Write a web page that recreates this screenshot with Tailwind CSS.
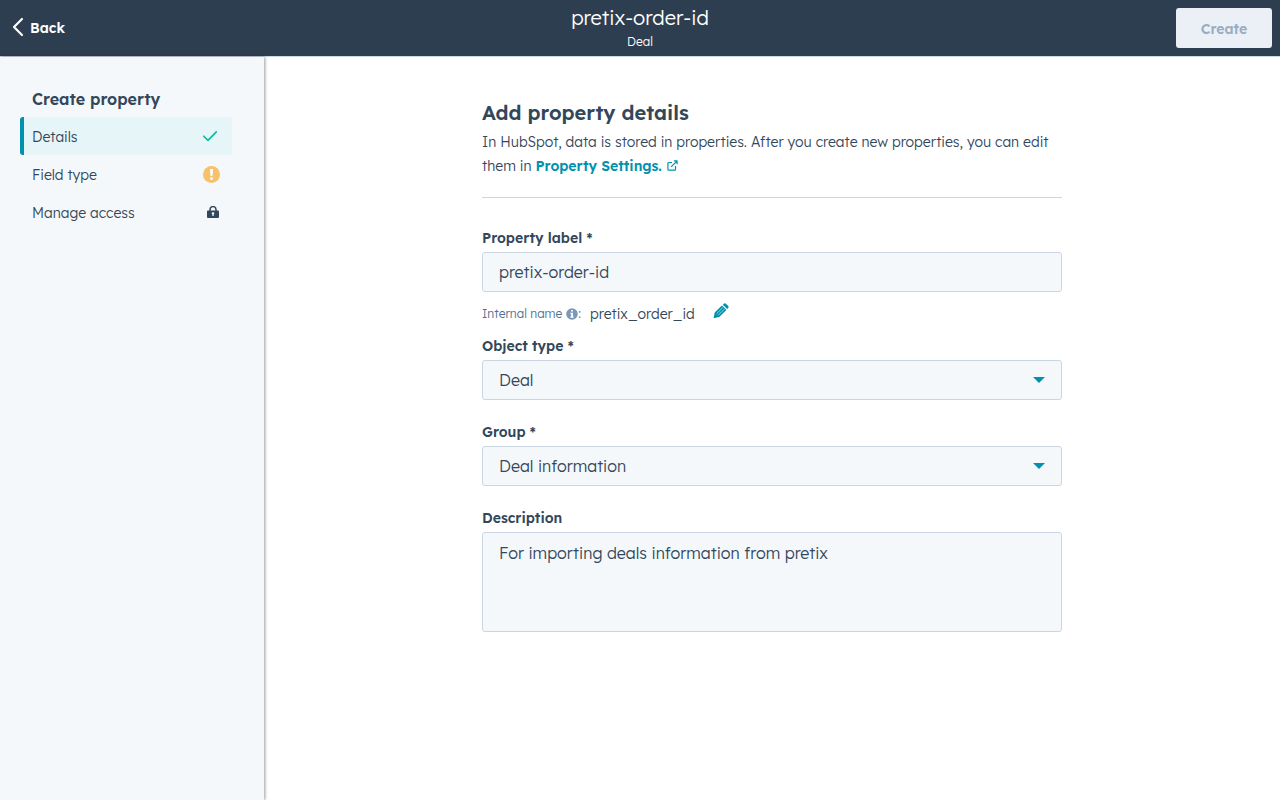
<!DOCTYPE html>
<html lang="en">
<head>
<meta charset="utf-8">
<meta name="viewport" content="width=device-width, initial-scale=1">
<title>Create property</title>
<script src="https://cdn.jsdelivr.net/npm/@tailwindcss/browser@4"></script>
</head>
<body class="flex min-h-screen flex-col bg-white font-['Lexend','Inter',sans-serif] text-sm font-light text-[#33475b]">
  <header class="grid h-14 shrink-0 grid-cols-3 items-center bg-[#2d3e50] text-white">
    <button type="button" class="flex h-10 items-center gap-1.5 justify-self-start pl-3 text-sm font-semibold">
      <svg class="mb-0.5 h-5 w-3" viewBox="0 0 12 20" fill="none" stroke="currentColor" stroke-width="2.2" stroke-linecap="round" stroke-linejoin="round" aria-hidden="true"><path d="M10 2 2 10l8 8"/></svg>
      <span>Back</span>
    </button>
    <div class="flex flex-col items-center">
      <h1 class="text-xl leading-8 font-light">pretix-order-id</h1>
      <p class="pb-1 text-xs leading-4">Deal</p>
    </div>
    <button type="button" disabled class="mr-2 h-10 w-24 justify-self-end rounded-[3px] bg-[#eaf0f6] pt-0.5 text-sm font-semibold text-[#99acc2]">Create</button>
  </header>
  <div class="flex grow border-t border-[#cbd6e2]">
    <nav class="w-[264px] shrink-0 bg-[#f5f8fa] pt-7 pr-8 pl-5 shadow-[1px_0_3px_rgba(0,0,0,0.4)]" aria-label="Create property">
      <h2 class="pb-1 pl-3 text-base leading-7 font-semibold">Create property</h2>
      <ul>
        <li><a href="#details" aria-current="step" class="flex h-[38px] items-center justify-between rounded-[3px] border-l-4 border-[#0091ae] bg-[#e5f5f8] pr-3.5 pl-2"><span class="pt-0.5">Details</span>
          <svg class="h-4 w-4" viewBox="0 0 16 16" fill="none" stroke="#00bda5" stroke-width="1.6" stroke-linecap="round" stroke-linejoin="round" aria-hidden="true"><path d="m1.800 8.200 4.200 4.200L14.300 3.900"/></svg></a></li>
        <li><a href="#field-type" class="flex h-[38px] items-center justify-between pr-3 pl-3"><span class="pt-0.5">Field type</span>
          <svg class="h-[17px] w-[17px]" viewBox="0 0 17 17" aria-hidden="true"><circle cx="8.500" cy="8.500" r="8.500" fill="#f5c26b"/><path d="M6.900 3h3.200l-.6 7H7.500z" fill="#fff"/><circle cx="8.500" cy="12.500" r="1.500" fill="#fff"/></svg></a></li>
        <li><a href="#access" class="flex h-[38px] items-center justify-between pr-[13px] pl-3"><span class="pt-0.5">Manage access</span>
          <svg class="h-3 w-3" viewBox="0 0 12 12" aria-hidden="true"><path d="M3 5.500V3.600a3 3 0 0 1 6 0v1.900" fill="none" stroke="#33475b" stroke-width="1.500"/><path d="M1 4.500h10a1 1 0 0 1 1 1V11a1 1 0 0 1-1 1H1a1 1 0 0 1-1-1V5.500a1 1 0 0 1 1-1z" fill="#33475b"/><path d="M6 6.200a1.200 1.200 0 0 0-.6 2.300V10h1.200V8.500A1.200 1.200 0 0 0 6 6.200z" fill="#fff"/></svg></a></li>
      </ul>
    </nav>
    <main class="grow px-6">
      <form class="mx-auto w-full max-w-[580px] pt-10 pb-10">
        <h2 class="text-xl leading-8 font-semibold">Add property details</h2>
        <p class="border-b border-[#cbd6e2] pt-px pb-[19px] leading-6">In HubSpot, data is stored in properties. After you create new properties, you can edit them in <a href="#settings" class="font-semibold text-[#0091ae]">Property Settings.<svg class="ml-[5px] inline h-[11px] w-[11px] align-baseline" viewBox="0 0 12 12" fill="none" stroke="currentColor" stroke-width="1.300" stroke-linejoin="round" aria-hidden="true"><path d="M5.500 2.700H2a1 1 0 0 0-1 1V10a1 1 0 0 0 1 1h6.300a1 1 0 0 0 1-1V6.500M7.500 1H11v3.500M10.800 1.200 4.500 7.500"/></svg></a></p>

        <label for="label" class="mt-7 block pb-0.5 leading-6 font-semibold">Property label *</label>
        <input id="label" type="text" value="pretix-order-id" class="block h-10 w-full rounded-[3px] border border-[#cbd6e2] bg-[#f5f8fa] px-4 text-base font-light">
        <div class="mt-2.5 flex h-6 items-center">
          <span class="flex items-center text-xs text-[#516f90]">Internal name
            <svg class="mb-px ml-1 h-3 w-3" viewBox="0 0 11 11" aria-hidden="true"><circle cx="5.500" cy="5.500" r="5.300" fill="#7c98b6"/><path d="M4.700 1.800h1.700v1.500H4.700zM4 4.400h2.400v3.400H7V9H4V7.800h.7V5.500H4z" fill="#fff"/></svg>:</span>
          <span class="ml-[9px]">pretix_order_id</span>
          <button type="button" aria-label="Edit internal name" class="mb-1.5 ml-[18px]">
            <svg class="block h-4 w-4" viewBox="0 0 16 16" fill="#0091ae" aria-hidden="true"><path d="M.6 15.200 1.700 9.600 8.900 2.400l4.500 4.500L6.200 14.100zM9.800 1.700l.8-.8a1.800 1.800 0 0 1 2.500 0l1.900 1.900a1.800 1.800 0 0 1 0 2.500l-.8.800z"/><path d="M3.600 10.700 9.800 4.500M5.200 12.300l6.200-6.200" fill="none" stroke="#fff" stroke-width=".6"/></svg>
          </button>
        </div>

        <label for="object" class="mt-2 block pb-0.5 leading-6 font-semibold">Object type *</label>
        <div class="relative">
          <select id="object" class="block h-10 w-full appearance-none rounded-[3px] border border-[#cbd6e2] bg-[#f5f8fa] px-4 text-base font-light"><option>Deal</option></select>
          <svg class="pointer-events-none absolute top-[17px] right-[17px] h-1.5 w-3" viewBox="0 0 12 6" fill="#0091ae" aria-hidden="true"><path d="M0 0h12L6 6z"/></svg>
        </div>

        <label for="group" class="mt-5 block pb-0.5 leading-6 font-semibold">Group *</label>
        <div class="relative">
          <select id="group" class="block h-10 w-full appearance-none rounded-[3px] border border-[#cbd6e2] bg-[#f5f8fa] px-4 text-base font-light"><option>Deal information</option></select>
          <svg class="pointer-events-none absolute top-[17px] right-[17px] h-1.5 w-3" viewBox="0 0 12 6" fill="#0091ae" aria-hidden="true"><path d="M0 0h12L6 6z"/></svg>
        </div>

        <label for="description" class="mt-5 block pb-0.5 leading-6 font-semibold">Description</label>
        <textarea id="description" class="block h-[100px] w-full resize-none rounded-[3px] border border-[#cbd6e2] bg-[#f5f8fa] px-4 py-2 text-base font-light">For importing deals information from pretix</textarea>
      </form>
    </main>
  </div>
</body>
</html>
